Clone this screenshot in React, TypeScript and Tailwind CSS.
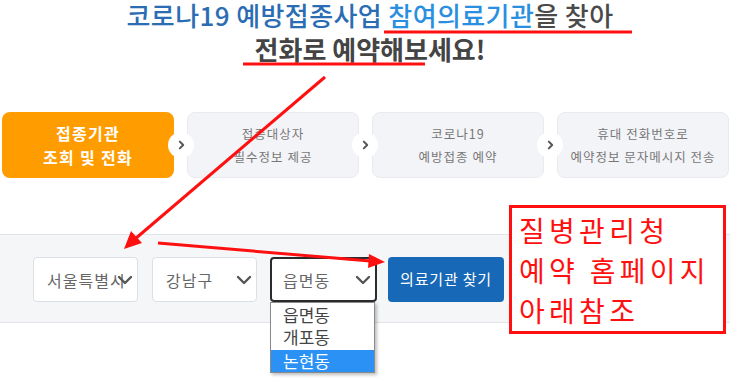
const font = { fontFamily: '"Noto Sans CJK KR", "Noto Sans", sans-serif' };

const steps = [
  { lines: ["접종기관", "조회 및 전화"], active: true },
  { lines: ["접종대상자", "필수정보 제공"], active: false },
  { lines: ["코로나19", "예방접종 예약"], active: false },
  { lines: ["휴대 전화번호로", "예약정보 문자메시지 전송"], active: false },
];

function Chevron({ className = "" }: { className?: string }) {
  return (
    <svg viewBox="0 0 16 10" className={className} fill="none" stroke="#555" strokeWidth="2.4" strokeLinecap="round" strokeLinejoin="round">
      <polyline points="2,2 8,8 14,2" />
    </svg>
  );
}

function Select({ label, width, focused }: { label: string; width: string; focused?: boolean }) {
  return (
    <div
      className={`relative h-[45px] ${width} rounded-[4px] bg-white overflow-hidden flex items-center ${
        focused ? "border-2 border-[#2b2b2b] pl-[11px]" : "border border-[#dcdfe3] pl-[13px]"
      }`}
    >
      <span className="text-[16px] tracking-[1px] text-[#666] whitespace-nowrap">{label}</span>
      <Chevron className="absolute right-[4px] top-1/2 -translate-y-1/2 w-[16px] h-[10px]" />
    </div>
  );
}

export default function App() {
  return (
    <div className="relative w-[730px] h-[382px] overflow-hidden bg-white" style={font}>
      {/* headline */}
      <div className="pl-[10px] text-center">
        <div className="font-medium text-[26px] leading-[30px] tracking-[0.4px]">
          <span className="text-[#2b6db4]">코로나19 예방접종사업 </span>
          <span className="text-[#2a8fe0]">참여의료기관</span>
          <span className="text-[#4a4a4a]">을 찾아</span>
        </div>
        <div className="font-bold text-[#444] text-[26px] leading-[38px]">전화로 예약해보세요!</div>
      </div>

      {/* steps */}
      <div className="mt-[44px] ml-[2px] mr-[1px] grid grid-cols-4 gap-[13px]">
        {steps.map((s, i) => (
          <div
            key={i}
            className={`relative h-[66px] rounded-[8px] flex flex-col items-center justify-center ${
              s.active
                ? "bg-[#ff9c00] text-white font-bold text-[16px] leading-[24px] tracking-[1.3px]"
                : "bg-[#f3f4f7] border border-[#e8eaee] text-[#777] text-[12.5px] leading-[23px] tracking-[1px]"
            }`}
          >
            {s.lines.map((l) => (
              <div key={l} className="whitespace-nowrap">{l}</div>
            ))}
            {i < 3 && (
              <div className="absolute z-10 -right-[20px] top-1/2 -translate-y-1/2 w-[26px] h-[26px] rounded-full bg-white flex items-center justify-center">
                <svg viewBox="0 0 8 12" className="w-[7px] h-[10px]" fill="none" stroke="#555" strokeWidth="2.4" strokeLinecap="round" strokeLinejoin="round">
                  <polyline points="2,2 6,6 2,10" />
                </svg>
              </div>
            )}
          </div>
        ))}
      </div>

      {/* search panel */}
      <div className="mt-[56px] h-[89px] bg-[#f5f6f8] border-y border-[#e2e4e8] flex items-start pt-[22px] pl-[33px]">
        <Select label="서울특별시" width="w-[105px]" />
        <div className="ml-[14px]">
          <Select label="강남구" width="w-[105px]" />
        </div>
        <div className="relative ml-[13px]">
          <Select label="읍면동" width="w-[107px]" focused />
          <div className="absolute left-0 top-[45px] w-[105px] h-[71px] bg-white border border-[#8a8a8a] shadow-[2px_2px_3px_rgba(0,0,0,0.25)] pt-[1px] text-[17px] leading-[22px] text-[#444] z-20">
            <div className="pl-[12px]">읍면동</div>
            <div className="pl-[12px]">개포동</div>
            <div className="pl-[12px] mt-[2px] bg-[#2b91f5] text-white">논현동</div>
          </div>
        </div>
        <button className="ml-[11px] h-[45px] w-[116px] rounded-[4px] bg-[#1768b6] text-white text-[15px] tracking-[0.8px]">
          의료기관 찾기
        </button>
      </div>

      {/* annotation box */}
      <div className="absolute left-[509px] top-[205px] w-[217px] h-[129px] border-[3px] border-[#ff1010] bg-white pt-[2px] pl-[7px] text-[28px] leading-[40px] tracking-[4.3px] text-[#ff1010] z-30 whitespace-nowrap">
        <div>질병관리청</div>
        <div>예약 홈페이지</div>
        <div>아래참조</div>
      </div>

      {/* annotation strokes */}
      <svg className="absolute inset-0 z-40 pointer-events-none" width="730" height="382" viewBox="0 0 730 382">
        <line x1="384" y1="32" x2="632" y2="32" stroke="#ff1010" strokeWidth="3" />
        <line x1="243" y1="64" x2="425" y2="64" stroke="#ff1010" strokeWidth="3" />
        <line x1="325" y1="77" x2="135" y2="239" stroke="#ff1010" strokeWidth="3" />
        <polygon points="124,249 131,231 142,243" fill="#ff1010" />
        <line x1="158" y1="243" x2="370" y2="261" stroke="#ff1010" strokeWidth="3" />
        <polygon points="385,262 369,254 368,268" fill="#ff1010" />
      </svg>
    </div>
  );
}
